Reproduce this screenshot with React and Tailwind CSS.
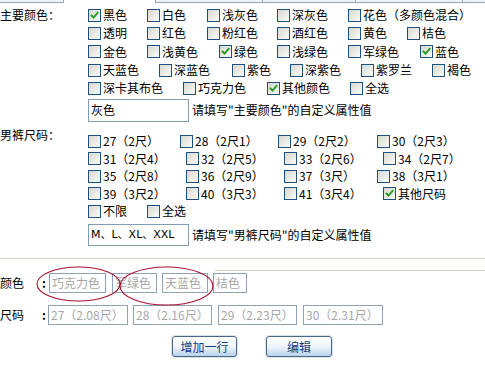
import React from "react";

function Box({ checked }) {
  return (
    <span className="relative w-[13px] h-[13px] shrink-0 border border-[#1c5180] bg-gradient-to-br from-[#d8d8d0] to-[#fbfbf9]">
      {checked && (
        <svg className="absolute left-0 top-0" width="11" height="11" viewBox="0 0 11 11">
          <path d="M2.5 5.5 L4.5 7.6 L8.6 2.8" fill="none" stroke="#21a121" strokeWidth="1.9" strokeLinecap="square" />
        </svg>
      )}
    </span>
  );
}

function Item({ label, w, checked }) {
  return (
    <div className={"flex items-center shrink-0 " + (w || "")}>
      <Box checked={checked} />
      <span className="ml-[2px] whitespace-nowrap">{label}</span>
    </div>
  );
}

const colorRows = [
  [["黑色", "w-[59px]", true], ["白色", "w-[60px]"], ["浅灰色", "w-[70px]"], ["深灰色", "w-[71px]"], ["花色（多颜色混合）", ""]],
  [["透明", "w-[59px]"], ["红色", "w-[60px]"], ["粉红色", "w-[70px]"], ["酒红色", "w-[71px]"], ["黄色", "w-[59px]"], ["桔色", ""]],
  [["金色", "w-[59px]"], ["浅黄色", "w-[72px]"], ["绿色", "w-[58px]", true], ["浅绿色", "w-[71px]"], ["军绿色", "w-[72px]"], ["蓝色", "", true]],
  [["天蓝色", "w-[71px]"], ["深蓝色", "w-[73px]"], ["紫色", "w-[58px]"], ["深紫色", "w-[71px]"], ["紫罗兰", "w-[71px]"], ["褐色", ""]],
  [["深卡其布色", "w-[95px]"], ["巧克力色", "w-[84px]"], ["其他颜色", "w-[83px]", true], ["全选", ""]],
];

const sizeRows = [
  [["27（2尺）", "w-[92px]"], ["28（2尺1）", "w-[98px]"], ["29（2尺2）", "w-[99px]"], ["30（2尺3）", ""]],
  [["31（2尺4）", "w-[98px]"], ["32（2尺5）", "w-[98px]"], ["33（2尺6）", "w-[99px]"], ["34（2尺7）", ""]],
  [["35（2尺8）", "w-[98px]"], ["36（2尺9）", "w-[98px]"], ["37（3尺）", "w-[93px]"], ["38（3尺1）", ""]],
  [["39（3尺2）", "w-[98px]"], ["40（3尺3）", "w-[98px]"], ["41（3尺4）", "w-[99px]"], ["其他尺码", "", true]],
  [["不限", "w-[59px]"], ["全选", ""]],
];

const grayColors = [
  ["巧克力色", "w-[57px] mr-[6px]"],
  ["军绿色", "w-[45px] mr-[5px]"],
  ["天蓝色", "w-[46px] mr-[5px]"],
  ["桔色", "w-[34px]"],
];

const graySizes = [
  ["27（2.08尺）", "w-[80px] mr-[5px]"],
  ["28（2.16尺）", "w-[79px] mr-[6px]"],
  ["29（2.23尺）", "w-[79px] mr-[6px]"],
  ["30（2.31尺）", "w-[80px]"],
];

function Btn({ children, w }) {
  return (
    <div className={"h-[21px] rounded-[3px] border border-[#4b6683] bg-gradient-to-b from-[#ffffff] via-[#eef4fb] to-[#bcd3ec] flex items-center justify-center text-[#123f7a] shadow-[0_0_0_1px_#d6e4f3] " + w}>
      {children}
    </div>
  );
}

export default function App() {
  return (
    <div className="relative w-[485px] h-[365px] overflow-hidden bg-white text-[12px] leading-[14px] text-black font-['Noto_Sans_CJK_SC','Noto_Sans',sans-serif]">
      {/* top strip */}
      <div className="flex h-[4px]">
        <div className="w-[64px] h-[3px] bg-[#eef1f5] border-r border-b border-[#9aaabb]" />
        <div className="w-[91px]" />
        <div className="flex-1 flex h-[3px]">
          <div className="w-[107px] bg-[#eef1f5] border-l border-b border-[#9aaabb]" />
          <div className="w-[93px] bg-[#eef1f5] border-l border-b border-[#9aaabb]" />
          <div className="w-[107px] bg-[#eef1f5] border-l border-b border-[#9aaabb]" />
          <div className="flex-1 bg-[#eef1f5] border-l border-b border-[#9aaabb]" />
        </div>
      </div>

      {/* main colours */}
      <div className="flex mt-[2px]">
        <div className="w-[88px] h-[18.33px] flex items-center shrink-0">主要颜色：</div>
        <div className="flex flex-col">
          {colorRows.map((row, i) => (
            <div key={i} className="flex items-center h-[18.33px]">
              {row.map(([l, w, c]) => (
                <Item key={l} label={l} w={w} checked={c} />
              ))}
            </div>
          ))}
          <div className="flex items-center mt-[1px]">
            <div className="w-[101px] h-[23px] border border-[#7f9db9] pl-[2px] pt-[3px]">灰色</div>
            <span className="ml-[3px]">请填写"主要颜色"的自定义属性值</span>
          </div>
        </div>
      </div>

      {/* sizes */}
      <div className="flex mt-[11px]">
        <div className="w-[88px] shrink-0 -mt-[5px]">男裤尺码：</div>
        <div className="flex flex-col">
          {sizeRows.map((row, i) => (
            <div key={i} className="flex items-center h-[17.5px]">
              {row.map(([l, w, c]) => (
                <Item key={l} label={l} w={w} checked={c} />
              ))}
            </div>
          ))}
          <div className="flex items-center mt-[4px]">
            <div className="w-[101px] h-[22px] border border-[#7f9db9] pl-[2px] pt-[3px] text-[11px] font-['DejaVu_Sans','Noto_Sans_CJK_SC',sans-serif]">M、L、XL、XXL</div>
            <span className="ml-[3px]">请填写"男裤尺码"的自定义属性值</span>
          </div>
        </div>
      </div>

      {/* separator lines */}
      <div className="h-px bg-[#d4d0c8] mt-[12px]" />
      <div className="h-px bg-[#d4d0c8] mt-[11px] ml-[215px]" />

      {/* preview colour row */}
      <div className="flex items-center h-[20px] mt-[2px]">
        <div className="w-[42px] shrink-0">颜色</div>
        <div className="w-[7px] shrink-0 font-bold">:</div>
        {grayColors.map(([t, w]) => (
          <div key={t} className={"h-[20px] border border-[#8ea3b8] pl-[2px] flex items-center text-[#a8a8a8] whitespace-nowrap " + w}>{t}</div>
        ))}
      </div>

      {/* preview size row */}
      <div className="flex items-center h-[20px] mt-[12px]">
        <div className="w-[42px] shrink-0">尺码</div>
        <div className="w-[6px] shrink-0 font-bold">:</div>
        {graySizes.map(([t, w]) => (
          <div key={t} className={"h-[20px] border border-[#8ea3b8] pl-[2px] flex items-center text-[#a8a8a8] whitespace-nowrap overflow-hidden " + w}>{t}</div>
        ))}
      </div>

      {/* buttons */}
      <div className="flex mt-[11px] ml-[172px] gap-[29px]">
        <Btn w="w-[65px]">增加一行</Btn>
        <Btn w="w-[66px]">编辑</Btn>
      </div>

      {/* red annotation ellipses */}
      <svg className="absolute left-0 top-0 pointer-events-none" width="485" height="365" viewBox="0 0 485 365">
        <ellipse cx="78.5" cy="284" rx="41.5" ry="17" fill="none" stroke="#a8122c" strokeWidth="1.1" />
        <ellipse cx="166.5" cy="286" rx="46.5" ry="19" fill="none" stroke="#a8122c" strokeWidth="1.1" />
      </svg>
    </div>
  );
}
